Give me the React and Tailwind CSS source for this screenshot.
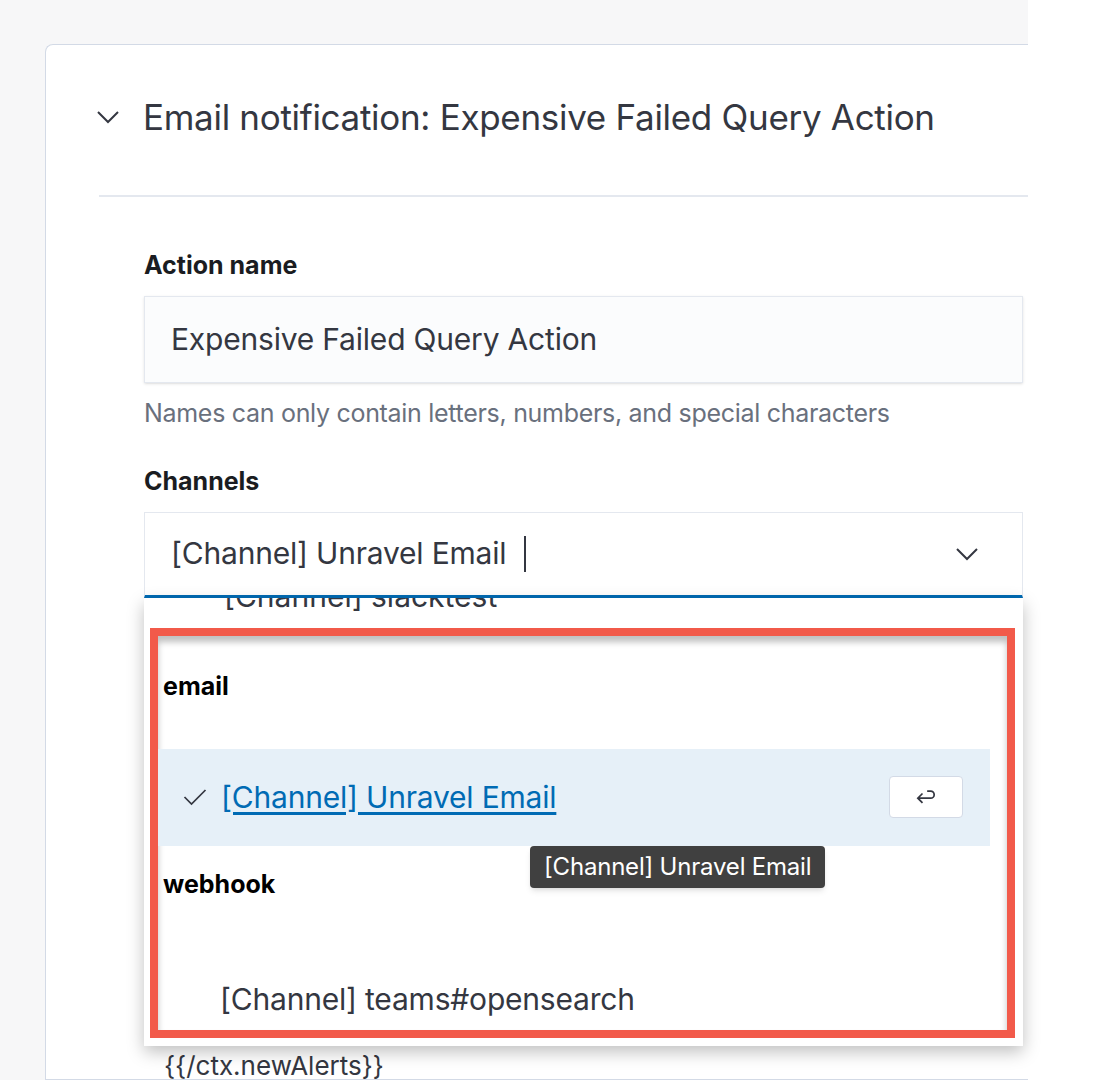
import React from "react";

function Chevron({ className }) {
  return (
    <svg viewBox="0 0 24 24" className={className} fill="none" stroke="currentColor" strokeWidth="1.6">
      <path d="M4 8l8 8 8-8" />
    </svg>
  );
}

export default function App() {
  return (
    <main
      className="w-[1106px] h-[1080px] overflow-hidden bg-white"
      style={{ fontFamily: "Inter, 'Liberation Sans', sans-serif" }}
    >
      <div className="w-[1028px] h-full bg-[#f7f7f8] pt-[44px] pl-[45px]">
        <div className="h-full bg-white border border-[#d3dae6] border-r-0 rounded-tl-lg pl-[53px]">
          {/* header */}
          <div className="flex items-center h-[152px] gap-[20px] pb-[6px] border-b-2 border-[#e4e8ef]">
            <Chevron className="w-[30px] h-[30px] text-[#343741] -ml-[6px]" />
            <h1 className="text-[35px] text-[#343741] tracking-[-0.3px] whitespace-nowrap">
              Email notification: Expensive Failed Query Action
            </h1>
          </div>

          <div className="pl-[45px] pt-[56px] w-[924px]">
            <label className="block text-[25px] font-bold text-[#1a1c21] leading-none">Action name</label>
            <div className="mt-[18px] h-[87px] bg-[#fbfcfd] border border-[#e4e8ef] shadow-sm flex items-center px-[26px] text-[30px] text-[#343741] tracking-[-0.2px]">
              Expensive Failed Query Action
            </div>
            <p className="mt-[12px] text-[25px] text-[#69707d] tracking-[-0.3px] whitespace-nowrap">
              Names can only contain letters, numbers, and special characters
            </p>

            <label className="block mt-[36px] text-[25px] font-bold text-[#1a1c21] leading-none">Channels</label>

            <div className="relative mt-[18px]">
              <div className="h-[86px] bg-white border border-[#e4e8ef] border-b-[3px] border-b-[#006bb4] flex items-center px-[26px] text-[30px] text-[#343741] tracking-[-0.2px]">
                <span>[Channel] Unravel Email</span>
                <span className="ml-[18px] w-[2px] h-[36px] bg-[#343741]" />
                <Chevron className="ml-auto w-[30px] h-[30px] text-[#343741] mr-[14px]" />
              </div>

              {/* dropdown list */}
              <div className="absolute left-0 top-[86px] w-[879px] h-[448px] bg-white shadow-[0_6px_16px_rgba(0,0,0,0.25)] overflow-hidden">
                <div className="pl-[80px] -mt-[24px] text-[30px] text-[#343741]">[Channel] slacktest</div>
                <div className="absolute left-[6px] top-[30px] w-[865px] h-[410px] border-[8px] border-[#f25a4a] bg-white shadow-[inset_0_6px_6px_rgba(0,0,0,0.25)]">
                  <div className="pt-[38px] pl-[5px] text-[25px] font-bold text-black leading-none">email</div>
                  <div className="mt-[50px] h-[97px] w-[832px] bg-[#e6f0f8] flex items-center pl-[23px] pr-[27px]">
                    <svg viewBox="0 0 24 24" className="w-[28px] h-[28px] text-[#343741]" fill="none" stroke="currentColor" strokeWidth="1.5">
                      <path d="M3 12l6 6L21 6" />
                    </svg>
                    <span className="ml-[12px] text-[30px] text-[#006bb4] underline underline-offset-4 tracking-[-0.2px]">[Channel] Unravel Email</span>
                    <span className="ml-auto w-[74px] h-[42px] bg-white border border-[#d3dae6] rounded flex items-center justify-center">
                      <svg viewBox="0 0 24 24" className="w-[28px] h-[28px] text-[#343741]" fill="none" stroke="currentColor" strokeWidth="1.5">
                        <path d="M13 7h3a3 3 0 0 1 0 6H5M9 9l-4 4 4 4" />
                      </svg>
                    </span>
                  </div>
                  <div className="pt-[26px] pl-[5px] text-[25px] font-bold text-black leading-none">webhook</div>
                  <div className="mt-[80px] pl-[62px] text-[30px] text-[#343741] tracking-[-0.2px]">[Channel] teams#opensearch</div>

                  {/* tooltip */}
                  <div className="absolute left-[372px] top-[210px] h-[42px] px-[14px] bg-[#404040] text-white text-[24px] tracking-[-0.2px] flex items-center rounded-sm shadow-md">
                    [Channel] Unravel Email
                  </div>
                </div>
              </div>
              <div className="h-[448px]" />
              <div className="pl-[20px] text-[26px] text-[#343741]">{"{{/ctx.newAlerts}}"}</div>
            </div>
          </div>
        </div>
      </div>
    </main>
  );
}
